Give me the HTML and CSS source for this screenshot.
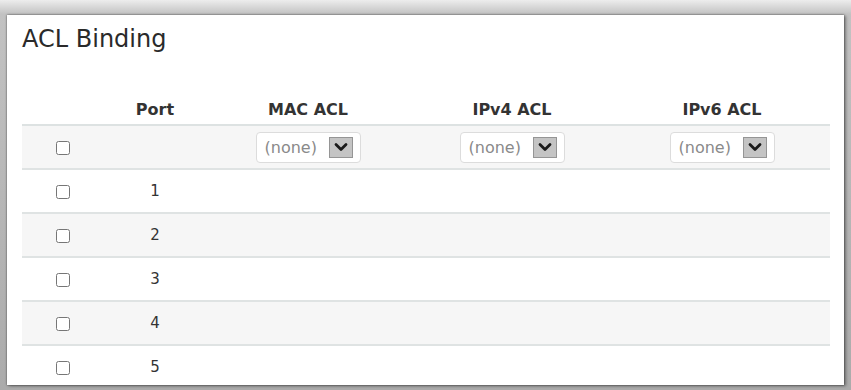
FILE: index.html
```html
<!DOCTYPE html>
<html lang="en">
  <head>
    <meta charset="UTF-8" />
    <meta name="viewport" content="width=device-width, initial-scale=1.0" />
    <title>ACL Binding</title>
    <link rel="stylesheet" href="styles.css">
  </head>
  <body>
    <main class="panel">
      <h1>ACL Binding</h1>

      <table class="binding-table">
        <thead>
          <tr>
            <th class="col-check"></th>
            <th class="col-port">Port</th>
            <th class="col-mac">MAC ACL</th>
            <th class="col-ipv4">IPv4 ACL</th>
            <th class="col-ipv6">IPv6 ACL</th>
          </tr>
        </thead>
        <tbody>
          <tr class="shaded">
            <td><input type="checkbox" /></td>
            <td></td>
            <td>
              <div class="fake-select">
                <span class="value">(none)</span>
                <span class="arrow">
                  <svg width="14" height="10" viewBox="0 0 14 10"><path d="M2 2.5 L7 7.5 L12 2.5" fill="none" stroke="#1a1a1a" stroke-width="2.8" stroke-linecap="round" stroke-linejoin="round"/></svg>
                </span>
              </div>
            </td>
            <td>
              <div class="fake-select">
                <span class="value">(none)</span>
                <span class="arrow">
                  <svg width="14" height="10" viewBox="0 0 14 10"><path d="M2 2.5 L7 7.5 L12 2.5" fill="none" stroke="#1a1a1a" stroke-width="2.8" stroke-linecap="round" stroke-linejoin="round"/></svg>
                </span>
              </div>
            </td>
            <td>
              <div class="fake-select">
                <span class="value">(none)</span>
                <span class="arrow">
                  <svg width="14" height="10" viewBox="0 0 14 10"><path d="M2 2.5 L7 7.5 L12 2.5" fill="none" stroke="#1a1a1a" stroke-width="2.8" stroke-linecap="round" stroke-linejoin="round"/></svg>
                </span>
              </div>
            </td>
          </tr>
          <tr>
            <td><input type="checkbox" /></td>
            <td>1</td>
            <td></td>
            <td></td>
            <td></td>
          </tr>
          <tr class="shaded">
            <td><input type="checkbox" /></td>
            <td>2</td>
            <td></td>
            <td></td>
            <td></td>
          </tr>
          <tr>
            <td><input type="checkbox" /></td>
            <td>3</td>
            <td></td>
            <td></td>
            <td></td>
          </tr>
          <tr class="shaded">
            <td><input type="checkbox" /></td>
            <td>4</td>
            <td></td>
            <td></td>
            <td></td>
          </tr>
          <tr>
            <td><input type="checkbox" /></td>
            <td>5</td>
            <td></td>
            <td></td>
            <td></td>
          </tr>
        </tbody>
      </table>
    </main>
  </body>
</html>
```

FILE: styles.css
```css
/* Page frame */
body {
  margin: 0;
  padding: 15px 7px 0 7px;
  height: 390px;
  box-sizing: border-box;
  overflow: hidden;
  font-family: "DejaVu Sans", "Liberation Sans", sans-serif;
  color: #333;
  background: linear-gradient(#ededed, #c2c2c2 14px, #ababab);
}

.panel {
  background: white;
  height: 370px;
  padding: 10px 14px 0 15px;
  box-sizing: border-box;
  box-shadow: 0 0 2px rgba(0, 0, 0, 0.6), 2px 1px 3px rgba(0, 0, 0, 0.35);
  overflow: hidden;
}

h1 {
  margin: 0;
  font-size: 24px;
  line-height: 29px;
  font-weight: normal;
  color: #2a2a2a;
}

/* Table */
.binding-table {
  margin-top: 47px;
  width: 808px;
  border-collapse: collapse;
  table-layout: fixed;
}

.col-check { width: 82px; }
.col-port { width: 102px; }
.col-mac { width: 204px; }
.col-ipv4 { width: 204px; }
.col-ipv6 { width: 216px; }

.binding-table th {
  font-size: 16px;
  line-height: 18px;
  font-weight: bold;
  color: #333;
  padding: 0 0 5px;
  text-align: center;
  border-bottom: 2px solid #dde2e2;
}

.binding-table td {
  height: 42px;
  padding: 0;
  text-align: center;
  vertical-align: middle;
  font-size: 15px;
  color: #333;
  border-bottom: 2px solid #dfe3e3;
}

.binding-table tr.shaded td {
  background: #f6f6f6;
}

.binding-table td:first-child {
  text-align: left;
  padding-left: 34px;
}

.binding-table input[type="checkbox"] {
  width: 14px;
  height: 14px;
  margin: 0;
  vertical-align: middle;
}

/* Select look-alike */
.fake-select {
  display: inline-flex;
  align-items: center;
  justify-content: space-between;
  width: 105px;
  height: 31px;
  box-sizing: border-box;
  padding: 0 7px 0 8px;
  border: 1px solid #dcdcdc;
  border-radius: 4px;
  background: white;
  vertical-align: middle;
}

.fake-select .value {
  font-size: 16px;
  color: #8a8a8a;
}

.fake-select .arrow {
  width: 24px;
  height: 21px;
  box-sizing: border-box;
  border: 1px solid #959595;
  background: #c4c4c4;
  display: flex;
  align-items: center;
  justify-content: center;
}
```
